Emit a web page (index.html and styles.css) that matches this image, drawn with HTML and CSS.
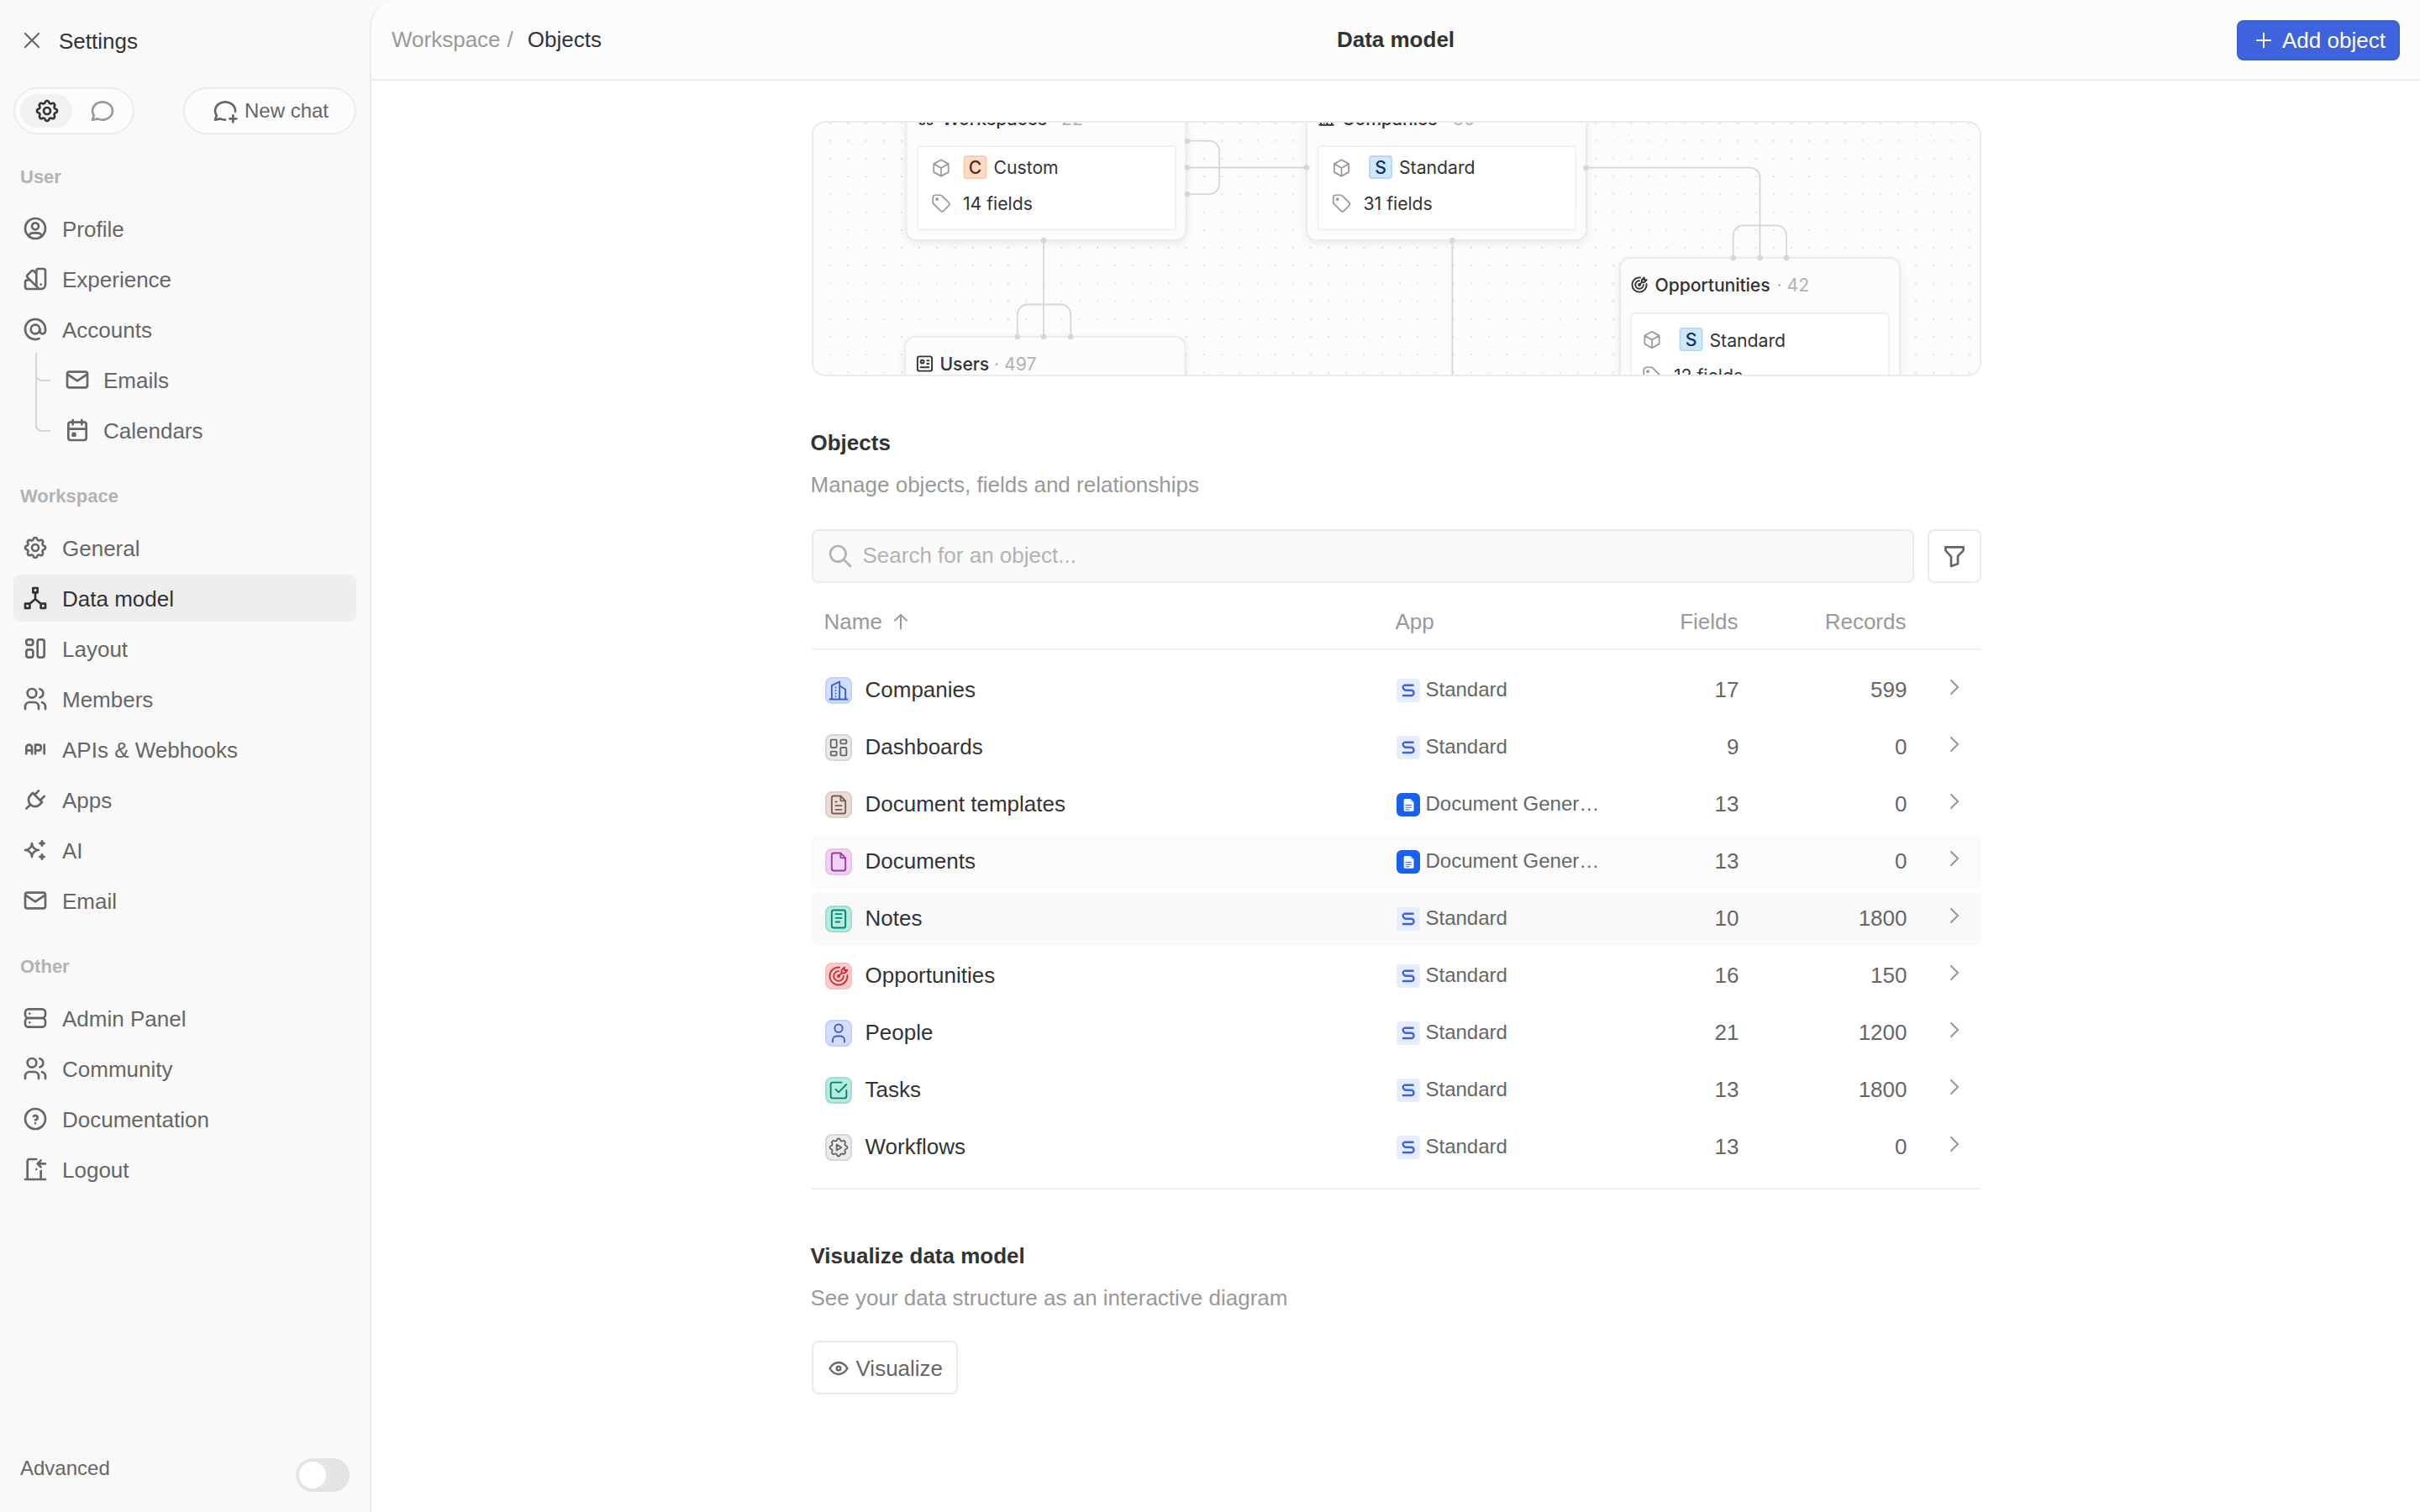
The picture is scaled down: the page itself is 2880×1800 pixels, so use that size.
FILE: index.html
```
<!DOCTYPE html>
<html lang="en">
<head>
  <meta charset="utf-8">
  <title>Data model - Settings</title>
  <link rel="stylesheet" href="styles.css">
</head>
<body>
  <!-- icon sprite -->
  <svg class="sprite">
    <symbol id="i-x" viewBox="0 0 24 24"><path d="M18 6L6 18M6 6l12 12"/></symbol>
    <symbol id="i-plus" viewBox="0 0 24 24"><path d="M12 5v14M5 12h14"/></symbol>
    <symbol id="i-gear-edge" viewBox="0 0 24 24"><path d="M10.325 4.317c.426 -1.756 2.924 -1.756 3.35 0a1.724 1.724 0 0 0 2.573 1.066c1.543 -.94 3.31 .826 2.37 2.37a1.724 1.724 0 0 0 1.065 2.572c1.756 .426 1.756 2.924 0 3.35a1.724 1.724 0 0 0 -1.066 2.573c.94 1.543 -.826 3.31 -2.37 2.37a1.724 1.724 0 0 0 -2.572 1.065c-.426 1.756 -2.924 1.756 -3.35 0a1.724 1.724 0 0 0 -2.573 -1.066c-1.543 .94 -3.31 -.826 -2.37 -2.37a1.724 1.724 0 0 0 -1.065 -2.572c-1.756 -.426 -1.756 -2.924 0 -3.35a1.724 1.724 0 0 0 1.066 -2.573c-.94 -1.543 .826 -3.31 2.37 -2.37c1 .608 2.296 .07 2.572 -1.065z"/></symbol>
    <symbol id="i-settings" viewBox="0 0 24 24"><use href="#i-gear-edge"/><circle cx="12" cy="12" r="3"/></symbol>
    <symbol id="i-automation" viewBox="0 0 24 24"><use href="#i-gear-edge"/><path d="M10 9v6l5 -3z"/></symbol>
    <symbol id="i-chat" viewBox="0 0 24 24"><path d="M3 20l1.3 -3.9c-2.324 -3.437 -1.426 -7.872 2.1 -10.374c3.526 -2.501 8.59 -2.296 11.845 .48c3.255 2.777 3.695 7.266 1.029 10.501c-2.666 3.235 -7.615 4.215 -11.574 2.293l-4.7 1"/></symbol>
    <symbol id="i-chat-plus" viewBox="0 0 24 24"><path d="M12.007 19.98a9.869 9.869 0 0 1 -4.307 -.98l-4.7 1l1.3 -3.9c-2.324 -3.437 -1.426 -7.872 2.1 -10.374c3.526 -2.501 8.59 -2.296 11.845 .48c1.992 1.7 2.93 4.04 2.747 6.34M16 19h6M19 16v6"/></symbol>
    <symbol id="i-user-circle" viewBox="0 0 24 24"><circle cx="12" cy="12" r="9"/><circle cx="12" cy="10" r="3"/><path d="M6.168 18.849a4 4 0 0 1 3.832 -2.849h4a4 4 0 0 1 3.834 2.855"/></symbol>
    <symbol id="i-swatch" viewBox="0 0 24 24"><path d="M19 3h-4a2 2 0 0 0 -2 2v12a4 4 0 0 0 8 0v-12a2 2 0 0 0 -2 -2M13 7.35l-2 -2a2 2 0 0 0 -2.828 0l-2.828 2.828a2 2 0 0 0 0 2.828l9 9M7.3 13h-2.3a2 2 0 0 0 -2 2v4a2 2 0 0 0 2 2h12M17 17v.01"/></symbol>
    <symbol id="i-at" viewBox="0 0 24 24"><circle cx="12" cy="12" r="4"/><path d="M16 12v1.5a2.5 2.5 0 0 0 5 0v-1.5a9 9 0 1 0 -5.5 8.28"/></symbol>
    <symbol id="i-mail" viewBox="0 0 24 24"><path d="M3 7a2 2 0 0 1 2 -2h14a2 2 0 0 1 2 2v10a2 2 0 0 1 -2 2h-14a2 2 0 0 1 -2 -2zM3 7l9 6l9 -6"/></symbol>
    <symbol id="i-calendar" viewBox="0 0 24 24"><rect x="4" y="5" width="16" height="16" rx="2"/><path d="M16 3v4M8 3v4M4 11h16M8 15h2v2h-2z"/></symbol>
    <symbol id="i-hierarchy" viewBox="0 0 24 24"><path d="M10 3h4v4h-4zM3 17h4v4h-4zM17 17h4v4h-4zM7 17l5 -4l5 4M12 7v6"/></symbol>
    <symbol id="i-layout" viewBox="0 0 24 24"><rect x="4" y="4" width="6" height="5" rx="2"/><rect x="4" y="13" width="6" height="7" rx="2"/><rect x="14" y="4" width="6" height="16" rx="2"/></symbol>
    <symbol id="i-users" viewBox="0 0 24 24"><circle cx="9" cy="7" r="4"/><path d="M3 21v-2a4 4 0 0 1 4 -4h4a4 4 0 0 1 4 4v2M16 3.13a4 4 0 0 1 0 7.75M21 21v-2a4 4 0 0 0 -3 -3.85"/></symbol>
    <symbol id="i-api" viewBox="0 0 24 24"><path d="M4 13h5M12 16v-8h3a2 2 0 0 1 2 2v1a2 2 0 0 1 -2 2h-3M20 8v8M9 16v-5.5a2.5 2.5 0 0 0 -5 0v5.5"/></symbol>
    <symbol id="i-plug" viewBox="0 0 24 24"><path d="M9.785 6l8.215 8.215l-2.054 2.054a5.81 5.81 0 1 1 -8.215 -8.215zM4 20l3.5 -3.5M15 4l-3.5 3.5M20 9l-3.5 3.5"/></symbol>
    <symbol id="i-sparkles" viewBox="0 0 24 24"><path d="M16 18a2 2 0 0 1 2 2a2 2 0 0 1 2 -2a2 2 0 0 1 -2 -2a2 2 0 0 1 -2 2zm0 -12a2 2 0 0 1 2 2a2 2 0 0 1 2 -2a2 2 0 0 1 -2 -2a2 2 0 0 1 -2 2zm-7 12a6 6 0 0 1 6 -6a6 6 0 0 1 -6 -6a6 6 0 0 1 -6 6a6 6 0 0 1 6 6z"/></symbol>
    <symbol id="i-server" viewBox="0 0 24 24"><rect x="3" y="4" width="18" height="8" rx="3"/><rect x="3" y="12" width="18" height="8" rx="3"/><path d="M7 8v.01M7 16v.01"/></symbol>
    <symbol id="i-help" viewBox="0 0 24 24"><circle cx="12" cy="12" r="9"/><path d="M12 16v.01M12 13a2 2 0 0 0 .914 -3.782a1.98 1.98 0 0 0 -2.414 .483"/></symbol>
    <symbol id="i-door" viewBox="0 0 24 24"><path d="M13 12v.01M3 21h18M5 21v-16a2 2 0 0 1 2 -2h6m4 10.5v7.5M21 7h-7m3 -3l-3 3l3 3"/></symbol>
    <symbol id="i-building" viewBox="0 0 24 24"><path d="M3 21h18M5 21v-14l8 -4v18M19 21v-10l-6 -4M9 9v.01M9 12v.01M9 15v.01M9 18v.01"/></symbol>
    <symbol id="i-dashboard" viewBox="0 0 24 24"><rect x="4" y="4" width="6" height="8" rx="1"/><rect x="4" y="16" width="6" height="4" rx="1"/><rect x="14" y="12" width="6" height="8" rx="1"/><rect x="14" y="4" width="6" height="4" rx="1"/></symbol>
    <symbol id="i-file" viewBox="0 0 24 24"><path d="M14 3v4a1 1 0 0 0 1 1h4M17 21h-10a2 2 0 0 1 -2 -2v-14a2 2 0 0 1 2 -2h7l5 5v11a2 2 0 0 1 -2 2z"/></symbol>
    <symbol id="i-file-text" viewBox="0 0 24 24"><use href="#i-file"/><path d="M9 9h1M9 13h6M9 17h6"/></symbol>
    <symbol id="i-notes" viewBox="0 0 24 24"><rect x="5" y="3" width="14" height="18" rx="2"/><path d="M9 7h6M9 11h6M9 15h4"/></symbol>
    <symbol id="i-target" viewBox="0 0 24 24"><circle cx="12" cy="12" r="1"/><path d="M12 7a5 5 0 1 0 5 5M13 3.055a9 9 0 1 0 7.941 7.945M15 6v3h3l3 -3h-3v-3zM15 9l-3 3"/></symbol>
    <symbol id="i-user" viewBox="0 0 24 24"><circle cx="12" cy="7" r="4"/><path d="M6 21v-2a4 4 0 0 1 4 -4h4a4 4 0 0 1 4 4v2"/></symbol>
    <symbol id="i-checkbox" viewBox="0 0 24 24"><path d="M9 11l3 3l8 -8M20 12v6a2 2 0 0 1 -2 2h-12a2 2 0 0 1 -2 -2v-12a2 2 0 0 1 2 -2h9"/></symbol>
    <symbol id="i-search" viewBox="0 0 24 24"><circle cx="10" cy="10" r="7"/><path d="M21 21l-6 -6"/></symbol>
    <symbol id="i-filter" viewBox="0 0 24 24"><path d="M4 4h16v2.172a2 2 0 0 1 -.586 1.414l-4.414 4.414v7l-6 2v-8.5l-4.48 -4.928a2 2 0 0 1 -.52 -1.345z"/></symbol>
    <symbol id="i-arrow-up" viewBox="0 0 24 24"><path d="M12 5v14M18 11l-6 -6l-6 6"/></symbol>
    <symbol id="i-chevron" viewBox="0 0 24 24"><path d="M9 6l6 6l-6 6"/></symbol>
    <symbol id="i-eye" viewBox="0 0 24 24"><circle cx="12" cy="12" r="2"/><path d="M21 12c-2.4 4 -5.4 6 -9 6c-3.6 0 -6.6 -2 -9 -6c2.4 -4 5.4 -6 9 -6c3.6 0 6.6 2 9 6"/></symbol>
    <symbol id="i-cube" viewBox="0 0 24 24"><path d="M12 3l8 4.5v9l-8 4.5l-8 -4.5v-9zM12 12l8 -4.5M12 12v9M12 12l-8 -4.5"/></symbol>
    <symbol id="i-tag" viewBox="0 0 24 24"><circle cx="7.5" cy="7.5" r="1"/><path d="M3 6v5.172a2 2 0 0 0 .586 1.414l7.71 7.71a2.41 2.41 0 0 0 3.408 0l5.592 -5.592a2.41 2.41 0 0 0 0 -3.408l-7.71 -7.71a2 2 0 0 0 -1.414 -.586h-5.172a3 3 0 0 0 -3 3z"/></symbol>
    <symbol id="i-id" viewBox="0 0 24 24"><rect x="3" y="3" width="18" height="18" rx="2.5"/><circle cx="9" cy="9.5" r="2"/><path d="M15 8h2M15 12h2M7 16.5h10"/></symbol>
    <symbol id="app-standard" viewBox="0 0 28 28"><rect class="std-bg" width="28" height="28" rx="4"/><path class="std-mark" d="M19.6 7.8H9.4M7.7 9.2v.6a4 4 0 0 0 4 4h5.7a3.1 3.1 0 0 1 0 6.2H7.9"/></symbol>
    <symbol id="app-docgen" viewBox="0 0 28 28"><rect class="doc-bg" width="28" height="28" rx="6"/><path class="doc-page" d="M10 7h6.5l4 4v9.5a1.3 1.3 0 0 1 -1.3 1.3h-9.2a1.3 1.3 0 0 1 -1.3 -1.3v-12.2a1.3 1.3 0 0 1 1.3 -1.3z"/><path class="doc-fold" d="M16.5 7l4 4h-4z"/><path class="doc-lines" d="M11.2 14.4h6.3M11.2 17.2h6.3M11.2 19.8h3.8"/></symbol>
  </svg>

  <aside class="sidebar">
    <div class="sidebar-head">
      <svg class="icon thin"><use href="#i-x"/></svg>
      <span>Settings</span>
    </div>

    <div class="sidebar-tools">
      <div class="switcher">
        <button class="active"><svg class="icon"><use href="#i-settings"/></svg></button>
        <button><svg class="icon"><use href="#i-chat"/></svg></button>
      </div>
      <button class="new-chat"><svg class="icon"><use href="#i-chat-plus"/></svg>New chat</button>
    </div>

    <h3 class="nav-label">User</h3>
    <nav>
      <a><svg class="icon"><use href="#i-user-circle"/></svg>Profile</a>
      <a><svg class="icon"><use href="#i-swatch"/></svg>Experience</a>
      <a><svg class="icon"><use href="#i-at"/></svg>Accounts</a>
      <a class="sub"><svg class="icon"><use href="#i-mail"/></svg>Emails</a>
      <a class="sub last"><svg class="icon"><use href="#i-calendar"/></svg>Calendars</a>
    </nav>

    <h3 class="nav-label">Workspace</h3>
    <nav>
      <a><svg class="icon"><use href="#i-settings"/></svg>General</a>
      <a class="active"><svg class="icon"><use href="#i-hierarchy"/></svg>Data model</a>
      <a><svg class="icon"><use href="#i-layout"/></svg>Layout</a>
      <a><svg class="icon"><use href="#i-users"/></svg>Members</a>
      <a><svg class="icon"><use href="#i-api"/></svg>APIs &amp; Webhooks</a>
      <a><svg class="icon"><use href="#i-plug"/></svg>Apps</a>
      <a><svg class="icon"><use href="#i-sparkles"/></svg>AI</a>
      <a><svg class="icon"><use href="#i-mail"/></svg>Email</a>
    </nav>

    <h3 class="nav-label">Other</h3>
    <nav>
      <a><svg class="icon"><use href="#i-server"/></svg>Admin Panel</a>
      <a><svg class="icon"><use href="#i-users"/></svg>Community</a>
      <a><svg class="icon"><use href="#i-help"/></svg>Documentation</a>
      <a><svg class="icon"><use href="#i-door"/></svg>Logout</a>
    </nav>

    <div class="advanced">
      <span>Advanced</span>
      <div class="toggle"><div class="knob"></div></div>
    </div>
  </aside>

  <main class="panel">
    <header class="topbar">
      <div class="breadcrumb">
        <span class="parent">Workspace</span>
        <span class="parent">/</span>
        <span class="current">Objects</span>
      </div>
      <h1>Data model</h1>
      <div class="topbar-actions">
        <button class="primary"><svg class="icon small"><use href="#i-plus"/></svg>Add object</button>
      </div>
    </header>

    <div class="content">
      <div class="diagram">
        <svg width="1388" height="300" viewBox="0 0 1388 300">
          <defs>
            <pattern id="dots" x="9.6" y="11.2" width="21.18" height="21.2" patternUnits="userSpaceOnUse">
              <circle class="dot" cx="10.6" cy="10.6" r="1"/>
            </pattern>
          </defs>
          <rect width="1388" height="300" fill="url(#dots)"/>

          <!-- Workspaces -->
          <g>
            <rect class="card" x="110.5" y="-60" width="333" height="200" rx="12"/>
            <svg class="head-icon" x="123" y="-16.5" width="22" height="22"><use href="#i-layout"/></svg>
            <text class="head" x="153" y="3">Workspaces</text>
            <text class="count" x="282" y="3">·</text>
            <text class="count" x="295" y="3">22</text>
            <rect class="box" x="124" y="28" width="307" height="99.5" rx="4"/>
            <svg class="row-icon" x="139" y="41" width="26" height="26"><use href="#i-cube"/></svg>
            <rect class="chip custom" x="179.5" y="40" width="26" height="26" rx="3"/>
            <text class="letter custom" x="192.5" y="60.5">C</text>
            <text class="label" x="214.5" y="61">Custom</text>
            <svg class="row-icon" x="139" y="83" width="26" height="26"><use href="#i-tag"/></svg>
            <text class="label" x="178" y="103.5">14 fields</text>
          </g>

          <!-- Companies -->
          <g>
            <rect class="card" x="587" y="-60" width="333" height="200" rx="12"/>
            <svg class="head-icon" x="599.5" y="-16.5" width="22" height="22"><use href="#i-building"/></svg>
            <text class="head" x="629" y="3">Companies</text>
            <text class="count" x="749" y="3">·</text>
            <text class="count" x="761" y="3">30</text>
            <rect class="box" x="600.5" y="28" width="307" height="99.5" rx="4"/>
            <svg class="row-icon" x="615.5" y="41" width="26" height="26"><use href="#i-cube"/></svg>
            <rect class="chip standard" x="662" y="40" width="26" height="26" rx="3"/>
            <text class="letter standard" x="675" y="60.5">S</text>
            <text class="label" x="697" y="61">Standard</text>
            <svg class="row-icon" x="615.5" y="83" width="26" height="26"><use href="#i-tag"/></svg>
            <text class="label" x="654.5" y="103.5">31 fields</text>
          </g>

          <!-- Users -->
          <g>
            <rect class="card" x="109" y="255" width="333.5" height="200" rx="12"/>
            <svg class="head-icon" x="121" y="275.5" width="23" height="23"><use href="#i-id"/></svg>
            <text class="head" x="150.5" y="295">Users</text>
            <text class="count" x="215" y="295">·</text>
            <text class="count" x="227" y="295">497</text>
          </g>

          <!-- Opportunities -->
          <g>
            <rect class="card" x="960" y="161" width="333" height="220" rx="12"/>
            <svg class="head-icon" x="971.5" y="181.5" width="23" height="23"><use href="#i-target"/></svg>
            <text class="head" x="1001.5" y="201">Opportunities</text>
            <text class="count" x="1146.5" y="201">·</text>
            <text class="count" x="1158.5" y="201">42</text>
            <rect class="box" x="973" y="227" width="307" height="120" rx="4"/>
            <svg class="row-icon" x="985" y="245.5" width="26" height="26"><use href="#i-cube"/></svg>
            <rect class="chip standard" x="1031.5" y="245" width="26" height="26" rx="3"/>
            <text class="letter standard" x="1044.5" y="265.5">S</text>
            <text class="label" x="1066.5" y="266.5">Standard</text>
            <svg class="row-icon" x="985" y="288" width="26" height="26"><use href="#i-tag"/></svg>
            <text class="label" x="1024" y="308.5">12 fields</text>
          </g>

          <!-- relations -->
          <path class="link" d="M445 21.7h26a12 12 0 0 1 12 12v39.5a12 12 0 0 1 -12 12h-26M445 53.5h142M274 140v115M242.8 255v-26.5a12 12 0 0 1 12 -12h39.4a12 12 0 0 1 12 12v26.5M760.4 140v160M919.5 53.7h195a12 12 0 0 1 12 12v95.3M1094.7 161v-26.7a12 12 0 0 1 12 -12h39.3a12 12 0 0 1 12 12v26.7"/>
          <g class="port">
            <circle cx="445" cy="21.7" r="3.3"/><circle cx="445" cy="53.5" r="3.3"/><circle cx="445" cy="85.2" r="3.3"/><circle cx="587" cy="53.5" r="3.3"/>
            <circle cx="274" cy="140.3" r="3.3"/><circle cx="242.8" cy="255" r="3.3"/><circle cx="274" cy="255" r="3.3"/><circle cx="306.2" cy="255" r="3.3"/>
            <circle cx="760.4" cy="140.3" r="3.3"/><circle cx="919.5" cy="53.7" r="3.3"/>
            <circle cx="1094.7" cy="161" r="3.3"/><circle cx="1126.5" cy="161" r="3.3"/><circle cx="1158" cy="161" r="3.3"/>
          </g>
        </svg>
      </div>

      <section class="objects">
        <h2>Objects</h2>
        <p>Manage objects, fields and relationships</p>

        <div class="search-row">
          <div class="search-bar">
            <svg class="icon"><use href="#i-search"/></svg>
            <span>Search for an object...</span>
          </div>
          <button class="filter-btn"><svg class="icon"><use href="#i-filter"/></svg></button>
        </div>

        <div class="table-head">
          <span class="sorted">Name<svg class="icon small"><use href="#i-arrow-up"/></svg></span>
          <span>App</span>
          <span class="num">Fields</span>
          <span class="num">Records</span>
        </div>

        <div class="table-body">
          <div class="row">
            <div class="name"><span class="tile blue"><svg class="icon small"><use href="#i-building"/></svg></span>Companies</div>
            <div class="app"><svg><use href="#app-standard"/></svg>Standard</div>
            <div class="num">17</div>
            <div class="num">599</div>
            <svg class="icon thin chevron"><use href="#i-chevron"/></svg>
          </div>
          <div class="row">
            <div class="name"><span class="tile gray"><svg class="icon small"><use href="#i-dashboard"/></svg></span>Dashboards</div>
            <div class="app"><svg><use href="#app-standard"/></svg>Standard</div>
            <div class="num">9</div>
            <div class="num">0</div>
            <svg class="icon thin chevron"><use href="#i-chevron"/></svg>
          </div>
          <div class="row">
            <div class="name"><span class="tile bronze"><svg class="icon small"><use href="#i-file-text"/></svg></span>Document templates</div>
            <div class="app"><svg><use href="#app-docgen"/></svg>Document Gener…</div>
            <div class="num">13</div>
            <div class="num">0</div>
            <svg class="icon thin chevron"><use href="#i-chevron"/></svg>
          </div>
          <div class="row fading">
            <div class="name"><span class="tile plum"><svg class="icon small"><use href="#i-file"/></svg></span>Documents</div>
            <div class="app"><svg><use href="#app-docgen"/></svg>Document Gener…</div>
            <div class="num">13</div>
            <div class="num">0</div>
            <svg class="icon thin chevron"><use href="#i-chevron"/></svg>
          </div>
          <div class="row hovered">
            <div class="name"><span class="tile teal"><svg class="icon small"><use href="#i-notes"/></svg></span>Notes</div>
            <div class="app"><svg><use href="#app-standard"/></svg>Standard</div>
            <div class="num">10</div>
            <div class="num">1800</div>
            <svg class="icon thin chevron"><use href="#i-chevron"/></svg>
          </div>
          <div class="row">
            <div class="name"><span class="tile red"><svg class="icon small"><use href="#i-target"/></svg></span>Opportunities</div>
            <div class="app"><svg><use href="#app-standard"/></svg>Standard</div>
            <div class="num">16</div>
            <div class="num">150</div>
            <svg class="icon thin chevron"><use href="#i-chevron"/></svg>
          </div>
          <div class="row">
            <div class="name"><span class="tile blue"><svg class="icon small"><use href="#i-user"/></svg></span>People</div>
            <div class="app"><svg><use href="#app-standard"/></svg>Standard</div>
            <div class="num">21</div>
            <div class="num">1200</div>
            <svg class="icon thin chevron"><use href="#i-chevron"/></svg>
          </div>
          <div class="row">
            <div class="name"><span class="tile teal"><svg class="icon small"><use href="#i-checkbox"/></svg></span>Tasks</div>
            <div class="app"><svg><use href="#app-standard"/></svg>Standard</div>
            <div class="num">13</div>
            <div class="num">1800</div>
            <svg class="icon thin chevron"><use href="#i-chevron"/></svg>
          </div>
          <div class="row">
            <div class="name"><span class="tile gray"><svg class="icon small"><use href="#i-automation"/></svg></span>Workflows</div>
            <div class="app"><svg><use href="#app-standard"/></svg>Standard</div>
            <div class="num">13</div>
            <div class="num">0</div>
            <svg class="icon thin chevron"><use href="#i-chevron"/></svg>
          </div>
        </div>
      </section>

      <section class="visualize">
        <h2>Visualize data model</h2>
        <p>See your data structure as an interactive diagram</p>
        <button class="secondary"><svg class="icon small"><use href="#i-eye"/></svg>Visualize</button>
      </section>
    </div>
  </main>
</body>
</html>
```
FILE: styles.css
```
* {
  margin: 0;
  padding: 0;
  box-sizing: border-box;
}

body {
  display: flex;
  width: 2880px;
  height: 1800px;
  overflow: hidden;
  background: #f9f9f9;
  color: #333;
  font-family: "Liberation Sans", Arial, sans-serif;
  font-size: 26px;
  line-height: 30px;
}

button {
  font: inherit;
  color: #666;
  background: none;
  border: none;
}

.sprite {
  position: absolute;
  width: 0;
  height: 0;
}

.icon {
  flex: none;
  display: block;
  width: 32px;
  height: 32px;
  fill: none;
  stroke: currentColor;
  stroke-width: 2;
  stroke-linecap: round;
  stroke-linejoin: round;
}

.icon.thin {
  stroke-width: 1.6;
}

.icon.small {
  width: 28px;
  height: 28px;
  stroke-width: 1.7;
}

/* Sidebar */

.sidebar {
  display: flex;
  flex-direction: column;
  width: 440px;
  padding: 0 16px;
}

.sidebar-head {
  display: flex;
  align-items: center;
  gap: 16px;
  height: 104px;
  padding: 0 6px 8px;
}

.sidebar-head .icon {
  color: #666;
}

.sidebar-head span {
  padding-top: 2px;
}

.sidebar-tools {
  display: flex;
  justify-content: space-between;
  height: 56px;
}

.switcher {
  display: flex;
  gap: 4px;
  width: 144px;
  padding: 6px;
  background: #fcfcfc;
  border: 2px solid #ebebeb;
  border-radius: 28px;
}

.switcher button {
  flex: 1;
  display: flex;
  align-items: center;
  justify-content: center;
  padding-left: 2px;
  border-radius: 20px;
  color: #999;
}

.switcher button.active {
  background: #f1f1f1;
  color: #333;
}

.new-chat {
  display: flex;
  align-items: center;
  justify-content: center;
  gap: 7px;
  width: 206px;
  padding-left: 1px;
  background: #fcfcfc;
  border: 2px solid #ebebeb;
  border-radius: 28px;
  font-size: 24px;
}

.nav-label {
  margin: 28px 8px 10px;
  font-size: 22px;
  line-height: 46px;
  color: #b3b3b3;
}

nav {
  display: flex;
  flex-direction: column;
  gap: 4px;
}

nav a {
  display: flex;
  align-items: center;
  gap: 16px;
  height: 56px;
  padding: 2px 10px 0;
  border-radius: 8px;
  color: #666;
}

nav a .icon {
  margin-bottom: 2px;
}

nav a.active {
  background: #eee;
  color: #333;
}

nav a.sub {
  position: relative;
  gap: 15px;
  padding-left: 60px;
}

/* tree lines beside the nested links */
nav a.sub::before,
nav a.sub::after {
  content: "";
  position: absolute;
  left: 26px;
  top: -4px;
  width: 16px;
  height: 32px;
  border: 2px solid #d6d6d6;
  border-width: 0 0 2px 2px;
  border-bottom-left-radius: 8px;
}

nav a.sub:not(.last)::after {
  width: 0;
  height: 60px;
  border-width: 0 0 0 2px;
  border-radius: 0;
}

.advanced {
  display: flex;
  align-items: flex-start;
  justify-content: space-between;
  height: 40px;
  margin: auto 8px 24px;
  font-size: 24px;
  line-height: 24px;
  color: #666;
}

.toggle {
  width: 64px;
  height: 40px;
  padding: 4px;
  border-radius: 20px;
  background: #e4e4e4;
}

.knob {
  width: 32px;
  height: 32px;
  border-radius: 50%;
  background: #fff;
}

/* Main panel */

.panel {
  flex: 1;
  overflow: hidden;
  background: #fff;
  border-left: 2px solid #ebebeb;
  border-top-left-radius: 32px;
}

.topbar {
  display: grid;
  grid-template-columns: 1fr auto 1fr;
  align-items: center;
  height: 96px;
  padding: 0 24px;
  background: #fcfcfc;
  border-bottom: 2px solid #ebebeb;
}

.topbar h1 {
  font-size: 26px;
}

.breadcrumb {
  display: flex;
  gap: 8px;
}

.breadcrumb .parent {
  color: #999;
}

.breadcrumb .current {
  margin-left: 9px;
}

.topbar-actions {
  display: flex;
  justify-content: flex-end;
}

.primary {
  display: flex;
  align-items: center;
  gap: 8px;
  width: 194px;
  height: 48px;
  margin-top: 2px;
  padding-left: 16px;
  border: 2px solid #3c5fd5;
  border-radius: 8px;
  background: #3e63dd;
  color: #fff;
  white-space: nowrap;
}

.content {
  width: 1392px;
  margin: 48px 0 0 523.5px;
}

/* Relation preview */

.diagram {
  height: 304px;
  border: 2px solid #ebebeb;
  border-radius: 16px;
  background: #fcfcfc;
  overflow: hidden;
  font-family: Inter, sans-serif;
  font-size: 21.2px;
}

.diagram > svg {
  display: block;
}

.diagram .dot {
  fill: #d6d6d6;
}

.diagram .card {
  fill: #fcfcfc;
  stroke: #ebebeb;
  stroke-width: 2;
  filter: drop-shadow(0 3px 4px rgba(0, 0, 0, 0.07));
}

.diagram .box {
  fill: #fff;
  stroke: #f1f1f1;
  stroke-width: 2;
}

.head-icon,
.row-icon {
  fill: none;
  stroke: #333;
  stroke-width: 2;
  stroke-linecap: round;
  stroke-linejoin: round;
}

.row-icon {
  stroke: #999;
  stroke-width: 1.6;
}

.diagram .head {
  font-weight: 500;
  fill: #333;
  letter-spacing: -0.1px;
}

.diagram .count {
  fill: #b3b3b3;
}

.diagram .label {
  fill: #333;
}

.diagram .letter {
  font-weight: 500;
  text-anchor: middle;
}

.chip {
  stroke-width: 2;
}

.chip.custom {
  fill: #ffdcc3;
  stroke: #ffcca7;
}

.chip.standard {
  fill: #cfe7ff;
  stroke: #b7d9f8;
}

.letter.custom {
  fill: #582d1d;
}

.letter.standard {
  fill: #113264;
}

.link {
  fill: none;
  stroke: #d6d6d6;
  stroke-width: 1.8;
}

.port {
  fill: #d6d6d6;
}

/* Objects */

h2 {
  margin-left: -1px;
  font-size: 26px;
  line-height: 30px;
}

section {
  margin-top: 64px;
}

section p {
  margin-top: 20px;
  margin-left: -1px;
  color: #999;
}

.search-row {
  display: flex;
  gap: 16px;
  margin-top: 38px;
}

.search-bar {
  flex: 1;
  display: flex;
  align-items: center;
  gap: 11px;
  height: 64px;
  padding: 0 16px;
  background: #fafafa;
  border: 2px solid #ebebeb;
  border-radius: 8px;
  color: #b3b3b3;
}

.search-bar span {
  padding-bottom: 2px;
}

.filter-btn {
  display: flex;
  align-items: center;
  justify-content: center;
  width: 64px;
  border: 2px solid #ebebeb;
  border-radius: 8px;
}

.table-head,
.row {
  display: grid;
  grid-template-columns: 680px 248px 160px 200px 1fr;
  align-items: center;
  padding: 0 16px 2px;
}

.table-head {
  height: 80px;
  padding: 14px 17px 0 15px;
  border-bottom: 2px solid #f1f1f1;
  color: #999;
}

.sorted {
  display: flex;
  align-items: center;
  gap: 8px;
}

.num {
  text-align: right;
}

.table-body {
  display: flex;
  flex-direction: column;
  gap: 4px;
  padding: 16px 0;
  border-bottom: 2px solid #f1f1f1;
}

.row {
  height: 64px;
  border-radius: 8px;
  color: #666;
}

.row.fading {
  background: #fbfbfb;
}

.row.hovered {
  background: #f9f9f9;
}

.name {
  display: flex;
  align-items: center;
  gap: 16px;
  color: #333;
}

.app {
  display: flex;
  align-items: center;
  gap: 7px;
  font-size: 24px;
}

.app svg {
  width: 28px;
  height: 28px;
  margin-top: 2px;
}

.chevron {
  justify-self: end;
  margin-bottom: 6px;
  color: #999;
}

.tile {
  width: 32px;
  height: 32px;
  margin-top: 2px;
  border: 2px solid;
  border-radius: 8px;
}

.tile.blue {
  background: #d2deff;
  border-color: #c1d0ff;
  color: #3a5bc7;
}

.tile.gray {
  background: #ebebeb;
  border-color: #d6d6d6;
  color: #666;
}

.tile.bronze {
  background: #eaddd7;
  border-color: #e0cec7;
  color: #7d5e54;
}

.tile.plum {
  background: #f2d1f3;
  border-color: #e9c2ec;
  color: #953ea3;
}

.tile.teal {
  background: #b8eae0;
  border-color: #a1dcd0;
  color: #008573;
}

.tile.red {
  background: #ffcdce;
  border-color: #fdbdbe;
  color: #ce2c31;
}

.tile .icon {
  stroke-width: 1.6;
}

.std-bg {
  fill: #e6edfe;
}

.std-mark {
  fill: none;
  stroke: #3e63dd;
  stroke-width: 2.5;
  stroke-linecap: round;
}

.doc-bg {
  fill: #1961ed;
}

.doc-page {
  fill: #fff;
}

.doc-fold {
  fill: #bcd2fb;
}

.doc-lines {
  stroke: #1961ed;
  stroke-width: 1;
  stroke-linecap: round;
}

.visualize p {
  margin-bottom: 36px;
}

.secondary {
  display: flex;
  align-items: center;
  gap: 7px;
  height: 64px;
  padding: 1px 16px 0;
  border: 2px solid #ebebeb;
  border-radius: 8px;
}

.secondary .icon {
  stroke-width: 2;
}
```
